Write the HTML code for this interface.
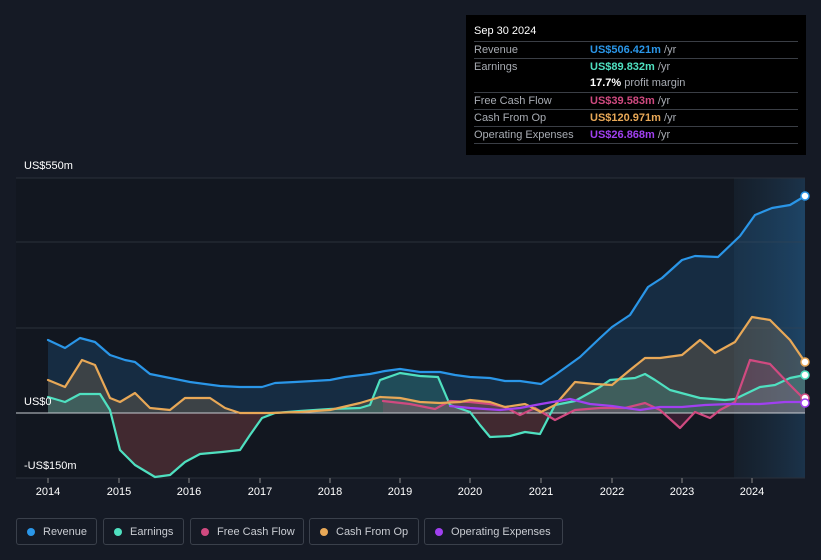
<!DOCTYPE html>
<html><head><meta charset="utf-8"><style>
body{margin:0;width:821px;height:560px;background:#151a25;font-family:"Liberation Sans",sans-serif;overflow:hidden;position:relative}
.tt{position:absolute;left:466px;top:15px;width:340px;height:140px;background:#000;color:#fff;font-size:11px}
.tt .h{position:absolute;left:8px;top:10px;font-size:11px}
.row{position:absolute;left:8px;width:324px;border-top:1px solid #3a3e45;height:17px;line-height:17px}
.row .l{position:absolute;left:0;color:#a8acb3}
.row .v{position:absolute;left:116px;color:#a8acb3}
.lab{position:absolute;color:#fff;font-size:11px}
.leg{position:absolute;top:518px;height:27px;border:1px solid #3a404b;border-radius:3px;color:#c9ccd2;font-size:11px;line-height:27px;box-sizing:border-box}
.leg i{display:inline-block;width:8px;height:8px;border-radius:50%;margin:0 8px 0 10px;vertical-align:-1px}
</style></head><body>
<svg width="821" height="560" style="position:absolute;left:0;top:0">
<rect x="16" y="178" width="789" height="300" fill="#121720"/>
<defs><linearGradient id="fc" x1="0" x2="1"><stop offset="0" stop-color="#1a2a3a" stop-opacity=".4"/><stop offset="1" stop-color="#1d3a55" stop-opacity=".8"/></linearGradient></defs>
<rect x="734" y="178" width="71" height="300" fill="url(#fc)"/>
<g stroke="#2a303a" stroke-width="1"><line x1="16" y1="178" x2="805" y2="178"/><line x1="16" y1="242" x2="805" y2="242"/><line x1="16" y1="328" x2="805" y2="328"/><line x1="16" y1="478" x2="805" y2="478"/></g>
<g fill-opacity=".18" stroke="none">
<polygon fill="#2a8fe0" points="48,413 48,340 65,348 80,338 95,342 110,355 125,360 135,362 150,374 165,377 190,382 220,386 240,387 262,387 275,383 295,382 330,380 345,377 370,374 385,371 400,369 420,372 440,372 455,375 470,377 490,378 505,381 520,381 541,384 555,375 580,357 600,338 612,327 630,315 648,287 662,278 682,260 695,256 718,257 740,236 755,215 772,208 790,205 805,196 805,413"/>
<polygon fill="#e8a857" points="48,413 48,380 65,387 82,360 95,365 110,398 120,402 135,393 150,408 170,410 185,398 210,398 225,408 240,413 270,413 300,412 330,410 360,403 380,397 400,398 420,402 440,403 460,402 470,400 490,402 505,407 525,404 541,412 555,405 575,382 595,384 612,385 630,370 645,358 660,358 682,355 700,340 715,353 735,342 752,317 770,320 790,340 805,362 805,413"/>
<polygon fill="#4fe0c0" points="48,413 48,397 65,402 80,394 100,394 110,410 120,450 135,465 155,477 170,475 185,462 200,454 222,452 240,450 250,435 262,418 275,413 300,411 330,409 360,408 370,405 380,380 400,373 420,376 438,377 450,405 470,412 480,425 490,437 510,436 525,432 540,434 555,405 575,401 600,387 610,380 635,378 645,374 655,380 670,390 700,398 725,400 735,399 760,387 775,385 790,378 805,375 805,413"/>
<polygon fill="#d04a80" points="383,413 383,401 410,404 435,409 450,401 470,402 490,404 505,407 520,415 535,408 555,420 575,410 600,408 625,408 645,403 660,410 680,428 695,412 710,418 720,410 735,402 750,360 770,364 790,385 805,400 805,413"/>
</g>
<polygon fill="#5a1e28" fill-opacity=".6" points="110,413 120,450 135,465 155,477 170,475 185,462 200,454 222,452 240,450 250,435 262,418 266,413"/>
<polygon fill="#5a1e28" fill-opacity=".6" points="470,413 480,425 490,437 510,436 525,432 540,434 548,413"/>
<line x1="16" y1="413" x2="805" y2="413" stroke="#c8ccd2" stroke-width="1"/>
<g fill="none" stroke-width="2.2" stroke-linejoin="round" stroke-linecap="round">
<polyline stroke="#4fe0c0" points="48,397 65,402 80,394 100,394 110,410 120,450 135,465 155,477 170,475 185,462 200,454 222,452 240,450 250,435 262,418 275,413 300,411 330,409 360,408 370,405 380,380 400,373 420,376 438,377 450,405 470,412 480,425 490,437 510,436 525,432 540,434 555,405 575,401 600,387 610,380 635,378 645,374 655,380 670,390 700,398 725,400 735,399 760,387 775,385 790,378 805,375"/>
<polygon fill="none" stroke="none" points="0,0"/>
<polyline stroke="#d04a80" points="383,401 410,404 435,409 450,401 470,402 490,404 505,407 520,415 535,408 555,420 575,410 600,408 625,408 645,403 660,410 680,428 695,412 710,418 720,410 735,402 750,360 770,364 790,385 805,400"/>
<polyline stroke="#e8a857" points="48,380 65,387 82,360 95,365 110,398 120,402 135,393 150,408 170,410 185,398 210,398 225,408 240,413 270,413 300,412 330,410 360,403 380,397 400,398 420,402 440,403 460,402 470,400 490,402 505,407 525,404 541,412 555,405 575,382 595,384 612,385 630,370 645,358 660,358 682,355 700,340 715,353 735,342 752,317 770,320 790,340 805,362"/>
<polyline stroke="#a040f0" points="450,406 470,408 500,410 520,408 541,404 570,399 590,404 612,406 640,410 660,407 682,407 705,405 730,404 760,404 785,402 805,402"/>
<polyline stroke="#2a96e8" points="48,340 65,348 80,338 95,342 110,355 125,360 135,362 150,374 165,377 190,382 220,386 240,387 262,387 275,383 295,382 330,380 345,377 370,374 385,371 400,369 420,372 440,372 455,375 470,377 490,378 505,381 520,381 541,384 555,375 580,357 600,338 612,327 630,315 648,287 662,278 682,260 695,256 718,257 740,236 755,215 772,208 790,205 805,196"/>
</g>
<g stroke-width="1.5" fill="#fff"><circle cx="805" cy="196" r="4" stroke="#2a96e8"/><circle cx="805" cy="362" r="4" stroke="#e8a857"/><circle cx="805" cy="375" r="4" stroke="#4fe0c0"/><circle cx="805" cy="398" r="4" stroke="#d04a80"/><circle cx="805" cy="403" r="4" stroke="#a040f0"/></g>
<g stroke="#888" stroke-width="1"><line x1="48" y1="478" x2="48" y2="483"/><line x1="119" y1="478" x2="119" y2="483"/><line x1="189" y1="478" x2="189" y2="483"/><line x1="260" y1="478" x2="260" y2="483"/><line x1="330" y1="478" x2="330" y2="483"/><line x1="400" y1="478" x2="400" y2="483"/><line x1="470" y1="478" x2="470" y2="483"/><line x1="541" y1="478" x2="541" y2="483"/><line x1="612" y1="478" x2="612" y2="483"/><line x1="682" y1="478" x2="682" y2="483"/><line x1="752" y1="478" x2="752" y2="483"/></g>
<g fill="#fff" font-size="11" text-anchor="middle" font-family="Liberation Sans"><text x="48" y="495">2014</text><text x="119" y="495">2015</text><text x="189" y="495">2016</text><text x="260" y="495">2017</text><text x="330" y="495">2018</text><text x="400" y="495">2019</text><text x="470" y="495">2020</text><text x="541" y="495">2021</text><text x="612" y="495">2022</text><text x="682" y="495">2023</text><text x="752" y="495">2024</text></g>
</svg>
<div class="lab" style="left:24px;top:160px">US$550m</div>
<div class="lab" style="left:24px;top:396px">US$0</div>
<div class="lab" style="left:24px;top:460px">-US$150m</div>
<div class="tt">
<div class="h">Sep 30 2024</div>
<div class="row" style="top:26px"><span class="l">Revenue</span><span class="v"><b style="color:#2a96e8">US$506.421m</b> /yr</span></div>
<div class="row" style="top:43px"><span class="l">Earnings</span><span class="v"><b style="color:#4fe0c0">US$89.832m</b> /yr</span></div>
<div class="row" style="top:60px;border-top:none"><span class="v"><b style="color:#fff">17.7%</b> profit margin</span></div>
<div class="row" style="top:77px"><span class="l">Free Cash Flow</span><span class="v"><b style="color:#d04a80">US$39.583m</b> /yr</span></div>
<div class="row" style="top:94px"><span class="l">Cash From Op</span><span class="v"><b style="color:#e8a857">US$120.971m</b> /yr</span></div>
<div class="row" style="top:111px"><span class="l">Operating Expenses</span><span class="v"><b style="color:#a040f0">US$26.868m</b> /yr</span></div>
<div class="row" style="top:128px;height:0"></div>
</div>
<div class="leg" style="left:16px;width:81px"><i style="background:#2a96e8"></i>Revenue</div>
<div class="leg" style="left:103px;width:81px"><i style="background:#4fe0c0"></i>Earnings</div>
<div class="leg" style="left:190px;width:114px"><i style="background:#d04a80"></i>Free Cash Flow</div>
<div class="leg" style="left:309px;width:110px"><i style="background:#e8a857"></i>Cash From Op</div>
<div class="leg" style="left:424px;width:139px"><i style="background:#a040f0"></i>Operating Expenses</div>
</body></html>
